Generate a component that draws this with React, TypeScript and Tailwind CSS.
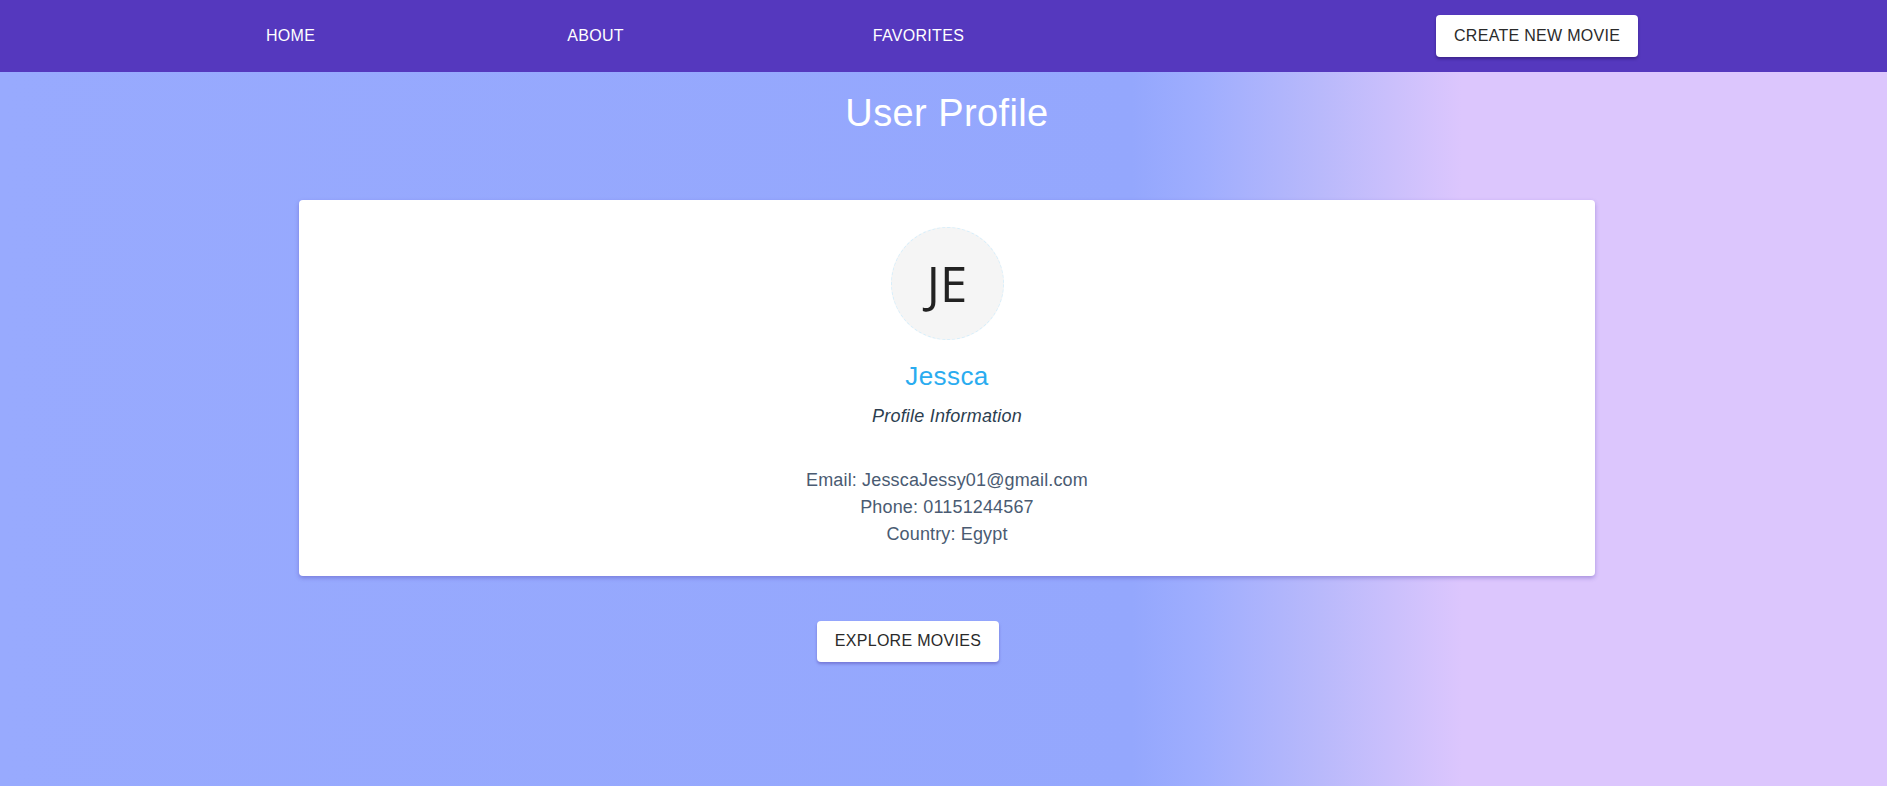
import React from "react";

const sans = { fontFamily: '"Liberation Sans", Arial, sans-serif' };

function NavBar() {
  return (
    <nav className="h-[72px] bg-[#5538be] flex items-center pl-[266px] text-white text-[16px] tracking-[0.3px]" style={sans}>
      <a className="cursor-pointer">HOME</a>
      <a className="ml-[252px] cursor-pointer">ABOUT</a>
      <a className="ml-[249px] cursor-pointer">FAVORITES</a>
      <button className="ml-[472px] h-[42px] w-[202px] bg-white text-[#2a2a2a] rounded-[4px] text-[16px] tracking-[0.3px] shadow-[0_2px_3px_rgba(30,10,80,0.45)]">
        CREATE NEW MOVIE
      </button>
    </nav>
  );
}

function ProfileCard() {
  return (
    <div className="bg-white rounded-[4px] shadow-[0_2px_4px_rgba(70,50,160,0.35)] pt-[27px] pb-[28px] flex flex-col items-center">
      <div className="w-[113px] h-[113px] rounded-full bg-[#f5f5f5] border border-dashed border-[#d8eefa] flex items-center justify-center">
        <span
          className="text-[49px] text-[#222] leading-none"
          style={{ fontFamily: '"Open Sans", sans-serif' }}
        >
          JE
        </span>
      </div>
      <h2 className="mt-[21px] text-[26px] leading-[1.2] tracking-[0.4px] text-[#2aacf0]">Jessca</h2>
      <p className="mt-[11px] text-[18px] leading-[27px] italic tracking-[0.2px] text-[#2c3e50]">Profile Information</p>
      <div className="mt-[37px] text-[18px] leading-[27px] tracking-[0.15px] text-[#4a5b72] text-center">
        <p>Email: JesscaJessy01@gmail.com</p>
        <p>Phone: 01151244567</p>
        <p>Country: Egypt</p>
      </div>
    </div>
  );
}

export default function App() {
  return (
    <div className="min-h-screen flex flex-col" style={sans}>
      <NavBar />
      <main className="flex-1 min-h-[714px] bg-[linear-gradient(90deg,#98aafe_0%,#94a7fd_60%,#9eadfe_63.5%,#b9b9fb_70%,#dcc6fd_77.5%,#dcc6fd_100%)]">
        <div className="ml-[299px] w-[1296px]">
          <h1 className="mt-[19px] text-[38px] leading-[1.2] tracking-[0.4px] text-white text-center">User Profile</h1>
          <div className="mt-[63px]">
            <ProfileCard />
          </div>
          <div className="mt-[45px] flex justify-center pr-[78px]">
            <button className="h-[41px] w-[182px] bg-white text-[#2a2a2a] rounded-[4px] text-[16px] tracking-[0.3px] shadow-[0_2px_3px_rgba(70,50,160,0.4)]">
              EXPLORE MOVIES
            </button>
          </div>
        </div>
      </main>
    </div>
  );
}
